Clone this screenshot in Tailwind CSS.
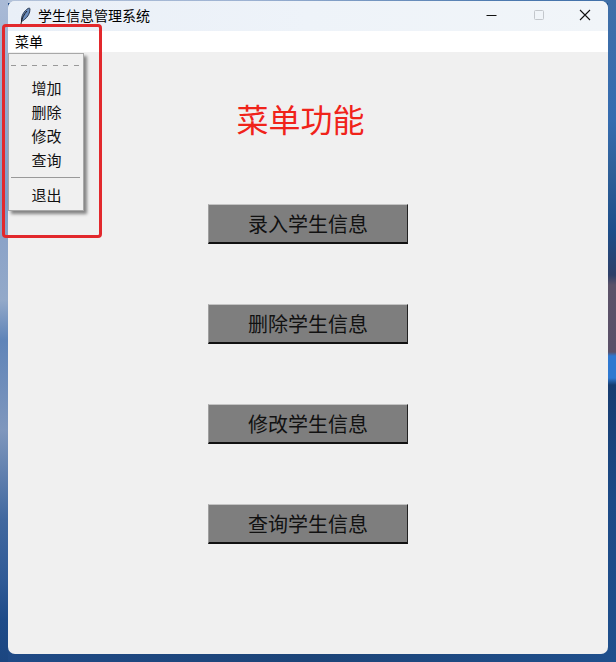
<!DOCTYPE html>
<html lang="zh">
<head>
<meta charset="utf-8">
<script src="https://cdn.jsdelivr.net/npm/@tailwindcss/browser@4"></script>
</head>
<body class="m-0 w-[616px] h-[662px] overflow-hidden relative bg-[linear-gradient(90deg,#1f4a86,#1c4478_50%,#1f4f8c)] font-['Noto_Sans_CJK_SC','Liberation_Sans',sans-serif]">
  <div class="absolute left-0 top-0 w-[616px] h-[3px] bg-[linear-gradient(90deg,#b4c3da,#9db2d2_40%,#4f7bb0_80%,#3f6fa8)]"></div>
  <div class="absolute left-0 top-0 w-[8px] h-[662px] bg-[linear-gradient(180deg,#a9bad6_0px,#7f9cc6_200px,#8ba3c8_240px,#93a9c9_300px,#5f84b8_340px,#7f97bd_430px,#41689f_520px,#2f5a96_580px,#1e4b88_620px,#1c4680_662px)]"></div>
  <div class="absolute right-0 top-0 w-[8px] h-[662px] bg-[linear-gradient(180deg,#3f6fa8_0px,#356cb0_120px,#2f6098_170px,#1d4e8a_230px,#2e3f68_275px,#5b5268_285px,#5a5068_352px,#2f78d0_356px,#2f78d0_378px,#173c70_385px,#1c4a86_500px,#1f4f8c_662px)]"></div>
  <div class="absolute left-[8px] top-[1px] w-[600px] h-[653px] rounded-[7px] overflow-hidden flex flex-col bg-[#f0f0f0]">
    <header class="h-[30px] shrink-0 pb-[1px] bg-[linear-gradient(90deg,#e9eff7,#eef3f9_50%,#f1f5f9)] flex items-center pl-[10px] text-[14px] text-black">
      <svg class="w-[14px] h-[18px]" viewBox="0 0 14 18"><path d="M3.5 14 C3 9 6 4 10 1.5 C11 1 12 1 12 2 C12 6 10 10 6.5 12.5 L4.5 14 Z" fill="#6b8cbc" stroke="#1c2b44" stroke-width="0.9"/><path d="M3 17 C3.5 12 6 7 9 4" stroke="#111" stroke-width="0.9" fill="none"/></svg>
      <span class="ml-[6px]">学生信息管理系统</span>
      <div class="ml-auto flex items-center h-full">
        <svg class="w-[46px] h-[30px]" viewBox="0 0 46 30"><path d="M16.5 14.5 H26.5" stroke="#111" stroke-width="1"/></svg>
        <svg class="w-[46px] h-[30px]" viewBox="0 0 46 30"><rect x="18.5" y="9.5" width="9" height="9" rx="1" fill="none" stroke="#c3c7cc"/></svg>
        <svg class="w-[46px] h-[30px]" viewBox="0 0 46 30"><path d="M18 9 L28 19 M28 9 L18 19" stroke="#111" stroke-width="1.1"/></svg>
      </div>
    </header>
    <nav class="h-[21px] shrink-0 bg-white flex items-center pl-[7px] text-[14px] text-black">菜单</nav>
    <main class="flex-1 flex flex-col items-center relative">
      <h1 class="mt-[45px] mb-[65px] ml-[-15px] text-[32px] leading-[42px] font-normal text-[#f0231a]">菜单功能</h1>
      <div class="flex flex-col gap-[60px] text-[20px] text-[#111]">
        <button class="w-[200px] h-[40px] bg-[#7e7e7e] border border-b-2 border-t-[#c4c4c4] border-l-[#a0a0a0] border-r-[#222] border-b-[#111] leading-none">录入学生信息</button>
        <button class="w-[200px] h-[40px] bg-[#7e7e7e] border border-b-2 border-t-[#c4c4c4] border-l-[#a0a0a0] border-r-[#222] border-b-[#111] leading-none">删除学生信息</button>
        <button class="w-[200px] h-[40px] bg-[#7e7e7e] border border-b-2 border-t-[#c4c4c4] border-l-[#a0a0a0] border-r-[#222] border-b-[#111] leading-none">修改学生信息</button>
        <button class="w-[200px] h-[40px] bg-[#7e7e7e] border border-b-2 border-t-[#c4c4c4] border-l-[#a0a0a0] border-r-[#222] border-b-[#111] leading-none">查询学生信息</button>
      </div>
    </main>
  </div>
  <div class="absolute left-[8px] top-[53px] w-[76px] h-[158px] bg-[#f0f0f0] border border-[#a8a8a8] shadow-[3px_3px_3px_rgba(0,0,0,0.45)] text-[15px] text-[#111]">
    <div class="mx-[2px] mt-[11px] h-px bg-[repeating-linear-gradient(90deg,#999_0_5px,transparent_5px_10.5px)]"></div>
    <ul class="mt-[10px] flex flex-col items-center pl-[1px]">
      <li class="h-[24px] leading-[24px]">增加</li>
      <li class="h-[24px] leading-[24px]">删除</li>
      <li class="h-[24px] leading-[24px]">修改</li>
      <li class="h-[24px] leading-[24px]">查询</li>
    </ul>
    <div class="ml-[2px] mr-[3px] mt-[5px] border-t border-[#999]"></div>
    <div class="mt-[5px] pl-[1px] text-center h-[24px] leading-[24px]">退出</div>
  </div>
  <div class="absolute left-[2px] top-[24px] w-[100px] h-[214px] border-[3px] border-[#e2282c] rounded-[4px]"></div>
</body>
</html>
